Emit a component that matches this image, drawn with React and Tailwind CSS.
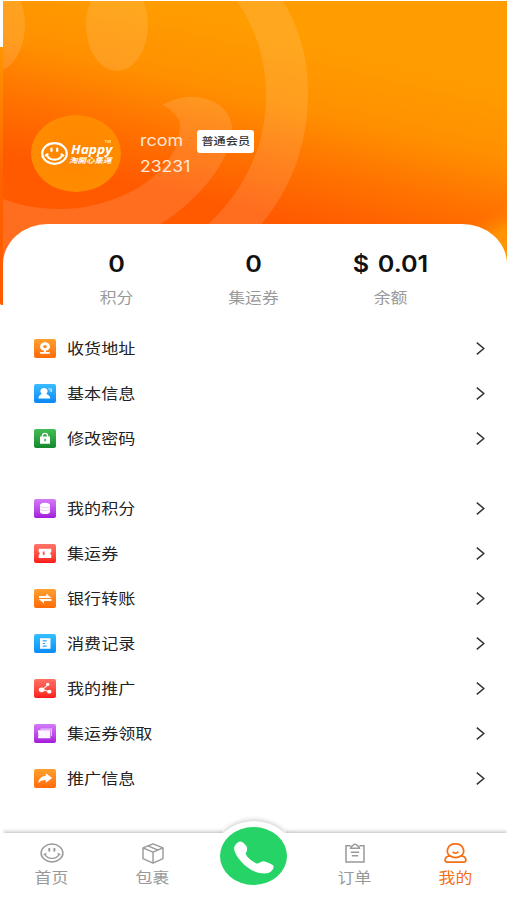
const stats = [
  { label: '积分', value: '0' },
  { label: '集运券', value: '0' },
  { label: '余额', value: '$ 0.01' },
];

const accountItems = [
  { label: '收货地址', icon: 'address', color: 'from-[#ffa02e] to-[#ff6a05]' },
  { label: '基本信息', icon: 'profile', color: 'from-[#3cbcff] to-[#0787f8]' },
  { label: '修改密码', icon: 'lock', color: 'from-[#42bd55] to-[#13892c]' },
];

const serviceItems = [
  { label: '我的积分', icon: 'coins', color: 'from-[#d479f8] to-[#a414da]' },
  { label: '集运券', icon: 'ticket', color: 'from-[#ff7468] to-[#fb1414]' },
  { label: '银行转账', icon: 'transfer', color: 'from-[#ffa02e] to-[#ff6a05]' },
  { label: '消费记录', icon: 'record', color: 'from-[#35c0ff] to-[#078cfa]' },
  { label: '我的推广', icon: 'share', color: 'from-[#ff6f66] to-[#fb1616]' },
  { label: '集运券领取', icon: 'coupons', color: 'from-[#d479f8] to-[#a414da]' },
  { label: '推广信息', icon: 'forward', color: 'from-[#ffa02e] to-[#ff6a05]' },
];

const glyphs = {
  address: (
    <>
      <path fillRule="evenodd" d="M11 3a5 4.200 0 0 1 5 4.200c0 2.300-2.200 4-5 4s-5-1.700-5-4A5 4.200 0 0 1 11 3Zm0 2.600a1.900 1.600 0 1 0 0 3.200 1.900 1.600 0 0 0 0-3.200Z" />
      <path d="M10 10.500h2v2.100h-2z" />
      <path d="M6.200 12.300h9.600v1.700H6.200z" />
    </>
  ),
  profile: (
    <>
      <path d="M10 3.700c2.200 0 3.600 1.300 3.600 2.900 0 1.100-.6 2-1.400 2.500 0 .9 3.800 1.100 4.100 4.600H4.500c.2-3.500 3.300-3.700 3.300-4.600-.8-.5-1.400-1.400-1.400-2.500 0-1.600 1.400-2.900 3.600-2.900Z" />
      <path d="M14.200 4.200h3.700v1h-3.700zM15.700 6h2.200v1h-2.200zM16.900 4.200h1v3.300h-1z" opacity=".75" />
    </>
  ),
  lock: (
    <path fillRule="evenodd" d="M7.700 7V6.300C7.700 4.600 9.100 3.500 11 3.500s3.300 1.100 3.300 2.800V7H16v7H6V7h1.700Zm1.400 0h3.800v-.6c0-.9-.8-1.600-1.900-1.600s-1.900.7-1.900 1.600V7Zm1.200 2.200v2.500h1.400V9.200h-1.400Z" />
  ),
  coins: (
    <>
      <path d="M6 6c0-1.500 2-2.400 5-2.400s5 .9 5 2.400v6c0 1.500-2 2.300-5 2.300S6 13.500 6 12Z" />
      <path d="M6 7.300c2.800 1.300 7.200 1.300 10 0M6 10c2.800 1.300 7.200 1.300 10 0" fill="none" stroke="#d79bf2" strokeWidth=".5" />
    </>
  ),
  ticket: (
    <path fillRule="evenodd" d="M4.700 4.500h12.600v3c-1.400.2-1.400 2.600 0 2.800v3H4.700v-3c1.400-.2 1.400-2.600 0-2.800Zm4.100 2.600v3.600l.9-.6.9.6V7.100Z" />
  ),
  transfer: (
    <>
      <path d="M5 6.700h7.300V4.200L17.500 8.500H5z" />
      <path d="M17.500 9.500H4.700l5.300 4.200v-2.300h7.500z" />
    </>
  ),
  record: (
    <>
      <path d="M6 4h10.500v10H6z" />
      <path d="M8.700 6.500h4M8.700 9h2.600M8.700 11.500h4" stroke="#2ba4fb" strokeWidth="1" />
    </>
  ),
  share: (
    <>
      <path d="M8 10l5.500-4M8 10l7 1.800" stroke="white" strokeWidth="1" />
      <ellipse cx="7.700" cy="10.300" rx="2.900" ry="2.300" />
      <ellipse cx="13.700" cy="5.300" rx="1.700" ry="1.400" />
      <ellipse cx="15.300" cy="12" rx="2.200" ry="1.800" />
    </>
  ),
  coupons: (
    <>
      <path d="M6.500 4.300h11.500v7h-1V5.500H6.500z" opacity=".65" />
      <path d="M4 6h12.300v7.500H4v-1.600c.9-.2.9-1 0-1.200v-1c.9-.2.9-1 0-1.200z" opacity=".95" />
    </>
  ),
  forward: <path d="M11.700 4.100l6.500 4.500-6.500 4.400v-2.600c-3-.1-5.400.8-7.400 3 .4-3.900 3-6.500 7.400-6.700Z" />,
};

function HeaderArt() {
  return (
    <svg className="absolute inset-0 h-full w-full" viewBox="0 0 504 303" preserveAspectRatio="none">
      <defs>
        <linearGradient id="base" gradientUnits="userSpaceOnUse" x1="285" y1="33" x2="243" y2="210">
          <stop offset="0" stopColor="#ff9d00" />
          <stop offset=".38" stopColor="#ff9000" />
          <stop offset=".72" stopColor="#ff7000" />
          <stop offset="1" stopColor="#ff5a00" />
        </linearGradient>
        <radialGradient id="glow" gradientUnits="userSpaceOnUse" cx="0" cy="0" r="1" gradientTransform="translate(520 265) rotate(-25) scale(130 62)">
          <stop offset="0" stopColor="#ff9b00" />
          <stop offset=".65" stopColor="#ff9200" />
          <stop offset="1" stopColor="#ff8400" stopOpacity="0" />
        </radialGradient>
      </defs>
      <rect width="504" height="303" fill="url(#base)" />
      <rect width="504" height="303" fill="url(#glow)" />
      <g fill="#fff" fillOpacity=".12">
        <ellipse cx="-7" cy="24" rx="29" ry="46" />
        <ellipse cx="114" cy="24" rx="31" ry="46" />
        <path d="M234 0h46c17 28 26 60 25 95-1 50-16 93-52 135h-55c43-37 65-84 65-135 0-35-9-65-29-95Z" />
        <path d="M159 104c12-6 22-9 32-8 20 1 35 11 38 29 2 32-35 79-83 105C100 256 50 268 0 262v-64c20 8 50 13 82 8 58-11 96-44 95-84-4-9-9-14-18-18Z" />
      </g>
    </svg>
  );
}

function Smile({ className, strokeWidth = 1.5 }) {
  return (
    <svg className={className} viewBox="0 0 24 22" preserveAspectRatio="none" fill="none" stroke="currentColor" strokeWidth={strokeWidth}>
      <ellipse cx="12" cy="11" rx="10.900" ry="9.900" />
      <path d="M9.300 6.300v2.200M14.400 6.300v2.200" strokeWidth="2" strokeLinecap="round" />
      <path d="M5 12.200c2 6.200 12 6.200 14 0M4.200 12.800l1.600-1M18.200 11.800l1.600 1" strokeLinecap="round" />
    </svg>
  );
}

function MenuRow({ item }) {
  return (
    <li className="flex h-[45px] items-center pr-[22px] pl-[31px]">
      <span className={`h-[19px] w-[22px] rounded-[2px] bg-gradient-to-b ${item.color}`}>
        <svg className="h-[19px] w-[22px]" viewBox="0 0 22 18" preserveAspectRatio="none" fill="#fff">
          {glyphs[item.icon]}
        </svg>
      </span>
      <span className="ml-[11px] origin-left scale-x-[1.17] text-[14.6px] leading-5 whitespace-nowrap text-[#222]">{item.label}</span>
      <svg className="ml-auto h-[13px] w-[9px]" viewBox="0 0 9 13" fill="none" stroke="#333" strokeWidth="1.500">
        <path d="M.8.700l7 5.800-7 5.800" />
      </svg>
    </li>
  );
}

function Tab({ label, active, children }) {
  return (
    <div className={`flex w-[101px] flex-col items-center pt-[9px] ${active ? 'text-[#f56f14]' : 'text-[#999]'}`}>
      <div className="flex h-[22px] items-center">{children}</div>
      <span className="mt-[4px] scale-x-[1.17] text-[14.4px] leading-5 whitespace-nowrap">{label}</span>
    </div>
  );
}

export default function App() {
  return (
    <div className="relative h-[900px] w-[507px] overflow-hidden bg-white font-['Inter','Noto_Sans_CJK_SC',sans-serif]">
      {/* Page edge beside the header */}
      <div className="absolute top-[47px] left-0 h-[258px] w-[4px] rounded-bl-[2px] bg-gradient-to-b from-[#ff9500] via-[#ff6200] to-[#ff5900]" />

      <div className="flex h-full flex-col pl-[3px]">
        <header className="relative h-[224px] shrink-0">
          <div className="absolute top-[1px] right-0 left-0 h-[303px]">
            <HeaderArt />
          </div>
          <div className="relative flex pt-[115px] pl-[28px]">
            <div className="flex h-[77px] w-[90px] items-center rounded-[50%] bg-radial from-[#ff8500] to-[#ff8e00] pl-[10px] text-white">
              <Smile className="h-[23px] w-[27px] shrink-0" strokeWidth={2} />
              <div className="ml-[1px]">
                <div className="ml-[2px] flex items-start">
                  <span className="origin-left scale-x-[1.1] text-[12.5px] leading-[13px] font-bold italic font-['Open_Sans',sans-serif]">Happy</span>
                  <span className="-mt-[3px] ml-[-4px] text-[4px] leading-[4px]">TM</span>
                </div>
                <div className="origin-left scale-x-[1.180] pt-[1px] text-[7.2px] leading-[8px] font-bold whitespace-nowrap italic">淘開心集運</div>
              </div>
            </div>
            <div className="ml-[19px] pt-[12px] text-[#ffe9d8]">
              <div className="flex h-[26px] items-center">
                <span className="w-[57px]">
                  <span className="inline-block origin-left scale-x-[1.12] text-[16px] leading-6">rcom</span>
                </span>
                <span className="mt-[2px] flex h-[23px] w-[57px] items-center justify-center rounded-[3px] bg-white pt-[2px]">
                  <span className="scale-x-[1.17] text-[10.4px] leading-4 font-medium whitespace-nowrap text-[#333]">普通会员</span>
                </span>
              </div>
              <div className="h-[26px] pt-[1px]">
                <span className="inline-block origin-left scale-x-[1.120] text-[15.700px] leading-6">23231</span>
              </div>
            </div>
          </div>
        </header>

        <main className="relative flex-1 rounded-t-[45px_40px] bg-white">
          <div className="grid grid-cols-3 pt-[26px] pr-[48px] pl-[45px] text-center">
            {stats.map((stat) => (
              <div key={stat.label}>
                <div className="scale-x-[1.120] text-[22.500px] leading-7 font-semibold text-[#111] [word-spacing:2px]">{stat.value}</div>
                <div className="mt-[10px] scale-x-[1.17] text-[14.4px] leading-5 text-[#999]">{stat.label}</div>
              </div>
            ))}
          </div>
          <ul className="mt-[18px]">
            {accountItems.map((item) => (
              <MenuRow key={item.label} item={item} />
            ))}
          </ul>
          <ul className="mt-[25px]">
            {serviceItems.map((item) => (
              <MenuRow key={item.label} item={item} />
            ))}
          </ul>
        </main>

        <nav className="relative h-[67px] shrink-0">
          <div className="absolute -top-[12px] left-[210px] h-[72px] w-[82px] rounded-[50%] bg-white shadow-[0_-1px_5px_rgba(0,0,0,0.22)]" />
          <div className="absolute inset-0 bg-white shadow-[0_-1px_4px_rgba(0,0,0,0.28)] [clip-path:polygon(0_-6px,219px_-6px,219px_0,283px_0,283px_-6px,100%_-6px,100%_100%,0_100%)]" />
          <div className="relative -ml-[2px] flex">
            <Tab label="首页">
              <Smile className="h-[20px] w-[24px]" />
            </Tab>
            <Tab label="包裹">
              <svg className="h-[21px] w-[22px]" viewBox="0 0 22 21" preserveAspectRatio="none" fill="none" stroke="currentColor" strokeWidth="1.400" strokeLinejoin="round">
                <path d="M11 .9l10 4v10.700l-10 4.500-10-4.500V4.900Z" />
                <path d="M1 4.900l10 4.200 10-4.200M11 9.100v11M6 2.900l10 4.200" />
              </svg>
            </Tab>
            <div className="flex w-[101px] justify-center">
              <div className="-mt-[6px] flex h-[58px] w-[67px] items-center justify-center rounded-[50%] bg-[#25d366] pt-[3px]">
                <svg className="h-[33px] w-[40px]" viewBox="0 0 120 98" preserveAspectRatio="none" fill="#fff">
                  <path d="M16 2C24-1 31 7 37 15c6 11-1 17-2 23 4 11 19 23 33 29 8 1 12-8 20-7 10 2 25 8 30 13 3 7-5 19-15 22-19 4-44-2-64-18C19 61 2 39 0 22 1 13 8 4 16 2Z" />
                </svg>
              </div>
            </div>
            <Tab label="订单">
              <svg className="h-[20px] w-[20px]" viewBox="0 0 20 20" fill="none" stroke="currentColor" strokeWidth="1.500">
                <path d="M5.500 2.800H1v16.300h18V2.800h-4.500" />
                <path d="M5.500 5.200c0-2 1.400-2 2.300-2.600.8-1.800 3.600-1.800 4.400 0 .9.600 2.300.6 2.300 2.600Z" />
                <path d="M5.800 9.300h8.400M6.800 12.700h6.400" />
              </svg>
            </Tab>
            <Tab label="我的" active>
              <svg className="h-[20px] w-[23px]" viewBox="0 0 23 20" preserveAspectRatio="none" fill="none" stroke="currentColor" strokeWidth="1.700">
                <path d="M6.300 13.300C.9 9.300 3.300.9 11.500.9s10.600 8.400 5.200 12.400" />
                <path d="M6.300 12.900c2.500 2.200 7.900 2.200 10.400 0 3 .3 5.200 1.700 5.200 4.100 0 1.400-1 2.100-2.400 2.100h-16C2.100 19.100 1.100 18.400 1.100 17c0-2.400 2.200-3.800 5.200-4.100Z" />
                <path d="M8.700 8.800c1.200 1.900 4.400 1.900 5.600 0" />
              </svg>
            </Tab>
          </div>
        </nav>
      </div>
    </div>
  );
}
